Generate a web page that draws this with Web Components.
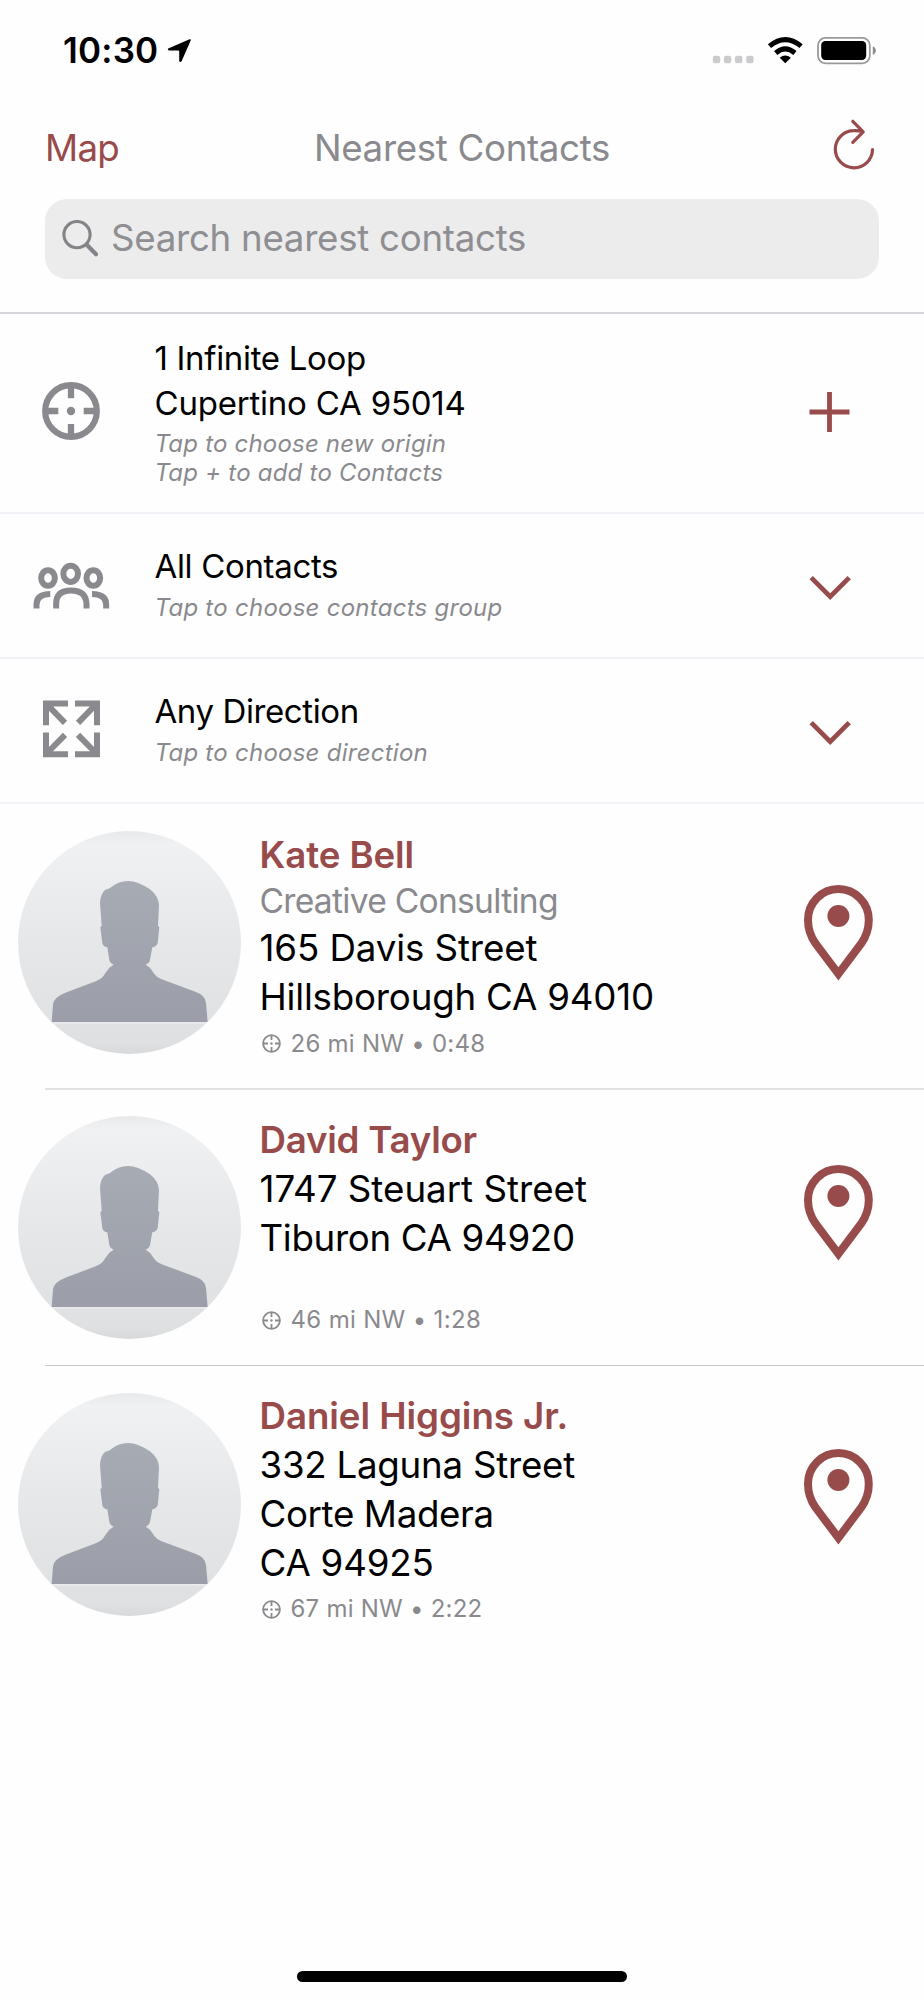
<!DOCTYPE html>
<html lang="en">
<head>
<meta charset="utf-8">
<title>Nearest Contacts</title>
<style>
    body {
        margin: 0;
        background: #fefefe;
        font-family: Inter, "Liberation Sans", sans-serif;
        --tint: #984b4b;
        --gray: #8a8a8e;
    }
</style>
</head>
<body>
<contacts-screen>
    <status-bar slot="header">10:30</status-bar>
    <nav-bar slot="header">
        <span slot="left" style="letter-spacing:-.7px">Map</span>
        <span style="letter-spacing:-.33px">Nearest Contacts</span>
    </nav-bar>
    <search-field slot="header">Search nearest contacts</search-field>

    <option-row icon="origin" action="plus">
        <span style="letter-spacing:-.32px">1 Infinite Loop</span>
        <span style="letter-spacing:-.21px">Cupertino CA 95014</span>
        <span slot="hint" style="letter-spacing:.2px">Tap to choose new origin</span>
        <span slot="hint" style="letter-spacing:.22px">Tap + to add to Contacts</span>
    </option-row>
    <option-row icon="group" action="chevron">
        <span style="letter-spacing:-.33px">All Contacts</span>
        <span slot="hint">Tap to choose contacts group</span>
    </option-row>
    <option-row icon="direction" action="chevron">
        <span style="letter-spacing:-.4px">Any Direction</span>
        <span slot="hint">Tap to choose direction</span>
    </option-row>

    <contact-row style="--height:286px;--photo-top:27px;--text-top:25.5px;--text-height:236px;--pin-top:81px;--line:2px;--line-color:#e2e2e4">
        <span slot="name" style="letter-spacing:-.1px">Kate Bell</span>
        <span slot="company">Creative Consulting</span>
        <span style="letter-spacing:-.1px">165 Davis Street</span>
        <span style="letter-spacing:-.2px">Hillsborough CA 94010</span>
        <span slot="distance" style="letter-spacing:.26px">26 mi NW • 0:48</span>
    </contact-row>
    <contact-row style="--height:276px;--photo-top:26px;--text-top:24.5px;--text-height:227.5px;--pin-top:75px;--line:1px;--line-color:#c9c9cb">
        <span slot="name" style="letter-spacing:-.25px">David Taylor</span>
        <span>1747 Steuart Street</span>
        <span style="letter-spacing:-.32px">Tiburon CA 94920</span>
        <span slot="distance" style="letter-spacing:.33px">46 mi NW • 1:28</span>
    </contact-row>
    <contact-row style="--height:280px;--photo-top:27px;--text-top:25px;--text-height:240px;--pin-top:83px;--line:0px;--line-color:transparent">
        <span slot="name" style="letter-spacing:-.06px">Daniel Higgins Jr.</span>
        <span style="letter-spacing:-.25px">332 Laguna Street</span>
        <span style="letter-spacing:-.36px">Corte Madera</span>
        <span style="letter-spacing:-.2px">CA 94925</span>
        <span slot="distance" style="letter-spacing:.24px">67 mi NW • 2:22</span>
    </contact-row>
</contacts-screen>

<script>
// attaches an open shadow root with the given markup
function render(el, html) {
    el.attachShadow({ mode: 'open' }).innerHTML = html;
}

class ContactsScreen extends HTMLElement {
    constructor() {
        super();
        render(this, `
            <style>
                :host {
                    display: flex;
                    flex-direction: column;
                    width: 924px;
                    height: 2000px;
                    overflow: hidden;
                }
                header {
                    box-sizing: border-box;
                    height: 314px;
                    border-bottom: 2px solid #d4d4d8;
                }
                main { flex: 1; }
                .home {
                    align-self: center;
                    width: 330px;
                    height: 11px;
                    margin-bottom: 18px;
                    border-radius: 6px;
                    background: #000;
                }
            </style>
            <header><slot name="header"></slot></header>
            <main><slot></slot></main>
            <div class="home"></div>
        `);
    }
}

class StatusBar extends HTMLElement {
    constructor() {
        super();
        render(this, `
            <style>
                :host {
                    display: flex;
                    align-items: center;
                    box-sizing: border-box;
                    height: 100px;
                    padding: 0 47px 0 63px;
                }
                .time {
                    font-size: 35px;
                    font-weight: 600;
                    line-height: 44px;
                    letter-spacing: .2px;
                }
                .arrow { margin-left: 9px; }
                .icons { margin-left: auto; }
            </style>
            <span class="time"><slot></slot></span>
            <svg class="arrow" width="25" height="26" viewBox="0 0 25 26">
                <path d="M1.2 11.6 22.6 2.2Q24.3 1.8 23.7 3.6L14.6 24.2Q13.2 25.8 12.2 24V14.4Q12.2 13.4 11.3 13.4H1.8Q0 12.7 1.2 11.6Z"/>
            </svg>
            <svg class="icons" width="165" height="30" viewBox="0 0 165 30">
                <g fill="#cbcbcd">
                    <rect x="0.8" y="20.8" width="7.4" height="7.4" rx="2.3"/>
                    <rect x="11.9" y="20.8" width="7.4" height="7.4" rx="2.3"/>
                    <rect x="23" y="20.8" width="7.4" height="7.4" rx="2.3"/>
                    <rect x="34.2" y="20.8" width="7.4" height="7.4" rx="2.3"/>
                </g>
                <g transform="translate(55.7 1.8)">
                    <path d="M17.6 26.5 12 20.9Q17.6 16.4 23.2 20.9Z"/>
                    <path fill="none" stroke="#000" stroke-width="5" d="M8 16.2Q17.6 8 27.2 16.2M1.8 9.4Q17.6-3.8 33.4 9.4"/>
                </g>
                <rect x="106" y="2.9" width="51.8" height="25.4" rx="7.5" fill="none" stroke="#9a9a9c" stroke-width="1.8"/>
                <rect x="109.2" y="6" width="45" height="19" rx="4.2"/>
                <path fill="#8c8c8e" d="M160.8 11.2Q163.8 12.6 163.8 15.6T160.8 20Z"/>
            </svg>
        `);
    }
}

class NavBar extends HTMLElement {
    constructor() {
        super();
        render(this, `
            <style>
                :host {
                    display: grid;
                    grid-template-columns: 1fr auto 1fr;
                    align-items: center;
                    height: 95px;
                    padding: 0 45px;
                    font-size: 36.7px;
                    line-height: 46px;
                    color: var(--gray);
                }
                .left, svg { color: var(--tint); }
                svg { justify-self: end; }
            </style>
            <span class="left"><slot name="left"></slot></span>
            <span><slot></slot></span>
            <svg width="48" height="60" viewBox="0 0 48 60" fill="none" stroke="currentColor" stroke-width="3.2" stroke-linecap="round" stroke-linejoin="round">
                <path d="M41.5 31.5A18.6 18.6 0 1 1 22.9 12.6Q27.5 12.4 31.8 13.8M21.8 3.3 32.2 13.9 21.8 24.3"/>
            </svg>
        `);
    }
}

class SearchField extends HTMLElement {
    constructor() {
        super();
        render(this, `
            <style>
                :host {
                    display: flex;
                    align-items: center;
                    height: 80px;
                    margin: 4px 45px 0;
                    border-radius: 22px;
                    background: #ececec;
                    color: #8e8e93;
                    font-size: 36.7px;
                    letter-spacing: -.29px;
                }
                svg { margin: 0 13px 0 16px; }
                span {
                    line-height: 46px;
                    margin-bottom: 3px;
                }
            </style>
            <svg width="37" height="38" viewBox="0 0 37 38" fill="none" stroke="#838388" stroke-linecap="round">
                <circle cx="16" cy="14.6" r="13.1" stroke-width="3.1"/>
                <path d="M26 25 35 34.2" stroke-width="4.2"/>
            </svg>
            <span><slot></slot></span>
        `);
    }
}

const rowIcons = {
    origin: `
        <circle cx="40" cy="30" r="25.8" stroke-width="6.2"/>
        <path stroke-width="6.3" d="M40 6V17.3M40 43V54M16 30H27.3M52.7 30H64"/>
        <circle cx="40" cy="30" r="4.2" fill="currentColor" stroke="none"/>`,
    group: `
        <g transform="translate(-31 6.5) scale(.33333)" stroke-width="18">
            <ellipse cx="212" cy="40" rx="22" ry="24.5"/>
            <ellipse cx="144" cy="52.5" rx="20.5" ry="23.5"/>
            <ellipse cx="280" cy="52.5" rx="20.5" ry="23.5"/>
            <path d="M168.5 144V130Q168.5 90 213 90T259.5 130V144"/>
            <path d="M109.5 144V132Q109.5 101 151 100.5M318.5 144V132Q318.5 101 276 100.5"/>
        </g>`,
    direction: `
        <g transform="translate(-31 -138.5) scale(.33333)" stroke-width="18">
            <path d="M204 429H138V494M140 431 195 487M225 429H291V494M289 431 234 487M204 581H138V516M140 579 195 523M225 581H291V516M289 579 234 523"/>
        </g>`
};

const rowActions = {
    plus: '<path d="M29.5 9V49M9.5 29H49.5"/>',
    chevron: '<path d="M11.2 21.6 30.2 40.6 49.2 21.6"/>'
};

class OptionRow extends HTMLElement {
    constructor() {
        super();
        render(this, `
            <style>
                :host {
                    display: flex;
                    align-items: center;
                    border-bottom: 2px solid #f2f1f6;
                    padding: 0 64px 0 31px;
                    --hint-gap: 5px;
                }
                :host([icon="origin"]) { --hint-gap: 4px; }
                .icon { color: var(--gray); }
                .text {
                    flex: 1;
                    padding: 29.5px 0 35px 43.5px;
                }
                :host([icon="origin"]) .text { padding: 22px 0 25px 43.5px; }
                .title {
                    display: grid;
                    font-size: 33px;
                    line-height: 44.5px;
                }
                .hint {
                    display: grid;
                    margin-top: var(--hint-gap);
                    font-size: 24px;
                    font-style: italic;
                    line-height: 29px;
                    letter-spacing: .26px;
                    color: var(--gray);
                }
                .action { color: var(--tint); }
            </style>
            <svg class="icon" width="80" height="64" viewBox="0 0 80 64" fill="none" stroke="currentColor">
                ${rowIcons[this.getAttribute('icon')]}
            </svg>
            <div class="text">
                <div class="title"><slot></slot></div>
                <div class="hint"><slot name="hint"></slot></div>
            </div>
            <svg class="action" width="60" height="60" viewBox="0 0 60 60" fill="none" stroke="currentColor" stroke-width="4.8">
                ${rowActions[this.getAttribute('action')]}
            </svg>
        `);
    }
}

class ContactAvatar extends HTMLElement {
    constructor() {
        super();
        render(this, `
            <style>
                :host {
                    display: block;
                    width: 223px;
                    height: 223px;
                    border-radius: 50%;
                    overflow: hidden;
                    background: linear-gradient(#e8e9ea, #f0f1f3 6%, #e6e7e9 50%, #dfe0e1 95%, #d8d9da);
                }
            </style>
            <svg width="223" height="223" viewBox="0 0 669 669">
                <defs>
                    <linearGradient id="body" x1="0" y1="0" x2="0" y2="1">
                        <stop offset="0" stop-color="#a7abb4"/>
                        <stop offset="1" stop-color="#9b9ea8"/>
                    </linearGradient>
                </defs>
                <path fill="url(#body)" d="M101 573 105 520Q108 498 146 484L235 450Q254 442 260 429L274 410 287 401Q276 397 274 387L268 349Q256 348 253 337L247 289 251 284 246 217Q246 190 261 177L275 172Q300 150 331 150 358 150 396 175 421 195 423 222L420 284 424 289 419 337Q414 348 403 349L396 387Q394 397 383 401L396 410 409 429Q415 438 431 445L532 482Q562 492 564 516L569 573Z"/>
                <rect x="90" y="573" width="490" height="5" fill="#ebebed"/>
            </svg>
        `);
    }
}

class ContactRow extends HTMLElement {
    constructor() {
        super();
        render(this, `
            <style>
                :host {
                    display: grid;
                    grid-template-columns: 223px 1fr 70px;
                    column-gap: 18.5px;
                    box-sizing: border-box;
                    height: var(--height);
                    padding: 0 50px 0 18px;
                    /* the divider starts at the list margin, not at the edge */
                    background: linear-gradient(var(--line-color), var(--line-color)) 45px 100% / 100% var(--line) no-repeat;
                    background-position-x: 45px;
                }
                contact-avatar { margin-top: var(--photo-top); }
                .text {
                    display: flex;
                    flex-direction: column;
                    height: var(--text-height);
                    margin-top: var(--text-top);
                }
                .name, .address {
                    display: grid;
                    font-size: 36.7px;
                    line-height: 49px;
                }
                .name {
                    font-weight: 600;
                    color: var(--tint);
                }
                .company {
                    font-size: 33.6px;
                    line-height: 44.5px;
                    letter-spacing: -.72px;
                    color: var(--gray);
                }
                .distance {
                    display: flex;
                    align-items: center;
                    gap: 10px;
                    margin: auto 0 0 2px;
                    font-size: 24px;
                    line-height: 44px;
                    color: var(--gray);
                }
                .pin {
                    margin-top: var(--pin-top);
                    color: var(--tint);
                }
            </style>
            <contact-avatar></contact-avatar>
            <div class="text">
                <div class="name"><slot name="name"></slot></div>
                <div class="company"><slot name="company"></slot></div>
                <div class="address"><slot></slot></div>
                <div class="distance">
                    <svg width="19" height="19" viewBox="0 0 19 19" fill="none" stroke="currentColor" stroke-width="1.8">
                        <circle cx="9.5" cy="9.5" r="8.4"/>
                        <path d="M9.5 1V6M9.5 13V18M1 9.5H6M13 9.5H18"/>
                        <circle cx="9.5" cy="9.5" r="1.2" fill="currentColor" stroke="none"/>
                    </svg>
                    <span><slot name="distance"></slot></span>
                </div>
            </div>
            <svg class="pin" width="69" height="96" viewBox="0 0 69 96">
                <path fill="none" stroke="currentColor" stroke-width="8" d="M34.4 88.8 11.5 58.5C6 50.5 4 42.5 4 35A30.4 30.9 0 0 1 64.8 35C64.8 42.5 62.8 50.5 57.3 58.5Z"/>
                <circle cx="34.4" cy="31" r="11" fill="currentColor"/>
            </svg>
        `);
    }
}

customElements.define('contacts-screen', ContactsScreen);
customElements.define('status-bar', StatusBar);
customElements.define('nav-bar', NavBar);
customElements.define('search-field', SearchField);
customElements.define('option-row', OptionRow);
customElements.define('contact-avatar', ContactAvatar);
customElements.define('contact-row', ContactRow);
</script>
</body>
</html>
